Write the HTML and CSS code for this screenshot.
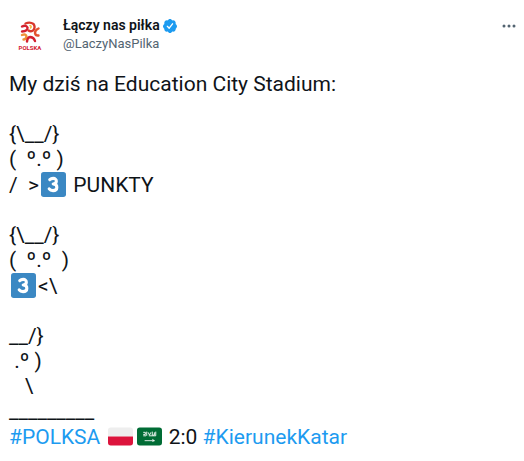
FILE: index.html
```html
<!DOCTYPE html>
<html lang="pl">
<head>
    <meta charset="UTF-8">
    <meta name="viewport" content="width=device-width, initial-scale=1.0">
    <title>Łączy nas piłka</title>
    <link rel="stylesheet" href="styles.css">
</head>
<body>
    <!-- Shared emoji shapes -->
    <svg class="sprite" aria-hidden="true">
        <symbol id="three" viewBox="0 0 36 36">
            <rect width="36" height="36" rx="4" fill="#3b88c3"/>
            <path d="M12.6 11 Q14.5 9.2 17.5 9.2 C23.8 9.2 23.5 17 17.5 17.3 C24.8 17.6 24.5 26.8 17.3 26.8 Q13.5 26.8 11.8 24.3" fill="none" stroke="#fff" stroke-width="4.4" stroke-linecap="round" stroke-linejoin="round"/>
        </symbol>
    </svg>

    <article class="tweet">
        <header class="tweet-header">
            <svg class="avatar" viewBox="0 0 48 48" role="img" aria-label="Polska">
                <g fill="none" stroke-width="2.4" stroke-linecap="round">
                    <path d="M14 16.5 Q18 14.5 19.5 17.5 Q20 21 14 21.5" stroke="#d3202f"/>
                    <path d="M17.5 13.5 Q22 11.5 25.5 14 Q28 17.5 25 20.5 Q22.5 22 20.5 20.5" stroke="#d9382c"/>
                    <path d="M22 15.5 Q24 16.5 22.5 18" stroke="#f4b942" stroke-width="1.6"/>
                    <path d="M30.5 18.5 Q27 20 27 23 Q27.5 26 30.5 25.5" stroke="#e2522f"/>
                    <path d="M14 25 Q18 23.5 18.5 26.5 Q18 29.5 15.5 29.5" stroke="#ee9338"/>
                    <path d="M19 31.5 Q19.5 27 22.5 27 Q26 27.5 27 31" stroke="#d3202f"/>
                </g>
                <text class="avatar-text" x="22" y="40" text-anchor="middle">POLSKA</text>
            </svg>
            <div class="author">
                <div class="name-row">
                    <a class="name" href="#">Łączy nas piłka</a>
                    <svg class="verified" viewBox="0 0 24 24" role="img" aria-label="Zweryfikowane konto">
                        <path fill="#1d9bf0" d="M22.5 12.5c0-1.58-.875-2.95-2.148-3.6.154-.435.238-.905.238-1.4 0-2.21-1.71-3.998-3.818-3.998-.47 0-.92.084-1.336.25C14.818 2.415 13.51 1.5 12 1.5s-2.816.917-3.437 2.25c-.415-.165-.866-.25-1.336-.25-2.11 0-3.818 1.79-3.818 4 0 .494.083.964.237 1.4-1.272.65-2.147 2.018-2.147 3.6 0 1.495.782 2.798 1.942 3.486-.02.17-.032.34-.032.514 0 2.21 1.708 4 3.818 4 .47 0 .92-.086 1.335-.25.62 1.334 1.926 2.25 3.437 2.25 1.512 0 2.818-.916 3.437-2.25.415.163.865.248 1.336.248 2.11 0 3.818-1.79 3.818-4 0-.174-.012-.344-.033-.513 1.158-.687 1.943-1.99 1.943-3.484z"/>
                        <path fill="none" stroke="#fff" stroke-width="2" stroke-linecap="round" stroke-linejoin="round" d="M8 12.5l2.8 2.8 5-6.6"/>
                    </svg>
                </div>
                <a class="handle" href="#">@LaczyNasPilka</a>
            </div>
            <button class="more-btn" type="button" aria-label="Więcej">
                <svg viewBox="0 0 14 4">
                    <circle cx="2" cy="2" r="1.5"/>
                    <circle cx="7" cy="2" r="1.5"/>
                    <circle cx="12" cy="2" r="1.5"/>
                </svg>
            </button>
        </header>

        <div class="tweet-text">
            <p>My dziś na Education City Stadium:</p>
            <p>{\__/}
(  º.º )
/  &gt;<svg class="emoji" role="img" aria-label="3"><use href="#three"/></svg> PUNKTY</p>
            <p>{\__/}
(  º.º  )
<svg class="emoji" role="img" aria-label="3"><use href="#three"/></svg>&lt;\</p>
            <p>__/}
 .º )
   \
_________
<a href="#">#POLKSA</a> <svg class="emoji" viewBox="0 0 36 36" role="img" aria-label="Polska"><path fill="#eee" d="M32 5H4a4 4 0 0 0-4 4v9h36V9a4 4 0 0 0-4-4z"/><path fill="#dc143c" d="M0 18v9a4 4 0 0 0 4 4h28a4 4 0 0 0 4-4v-9z"/></svg><svg class="emoji" viewBox="0 0 36 36" role="img" aria-label="Arabia Saudyjska"><rect y="5" width="36" height="26" rx="4" fill="#006c35"/><path d="M9 12h3v3h-3M14 11v6M16 12l2 4 2-4M22 11v5h3v-4M27 11v6M9 17h4M17 17h10" fill="none" stroke="#fff" stroke-width="1.3"/><path d="M11 24h14M22 22l3 2-3 1" fill="none" stroke="#fff" stroke-width="1.2"/></svg> 2:0 <a href="#">#KierunekKatar</a></p>
        </div>
    </article>
</body>
</html>
```

FILE: styles.css
```css
body {
    margin: 0;
    background-color: #fff;
    color: #0f1419;
    font-family: Roboto, "Liberation Sans", sans-serif;
}

a {
    color: #1d9bf0;
    text-decoration: none;
}

.sprite {
    display: none;
}

.tweet {
    padding: 10px 8px;
}

.tweet-header {
    display: flex;
    align-items: flex-start;
}

.avatar {
    width: 48px;
    height: 48px;
    margin-right: 7px;
    flex: none;
}

.avatar-text {
    font-size: 6px;
    font-weight: 700;
    fill: #d3202f;
}

.author {
    display: flex;
    flex: 1;
    flex-direction: column;
    padding-top: 6px;
}

.name-row {
    display: flex;
    align-items: center;
    gap: 2px;
}

.name {
    color: #0f1419;
    font-size: 14px;
    font-weight: 600;
    line-height: 19px;
}

.verified {
    width: 16px;
    height: 16px;
}

.handle {
    color: #536471;
    font-size: 13px;
    line-height: 18px;
}

.more-btn {
    display: flex;
    align-items: center;
    height: 32px;
    padding: 0;
    border: none;
    background: none;
    cursor: pointer;
}

.more-btn svg {
    width: 14px;
    height: 4px;
    fill: #536471;
}

.tweet-text {
    padding: 14px 1px 0;
    font-size: 21px;
    line-height: 25px;
}

.tweet-text p {
    margin: 0 0 25px;
    white-space: pre-wrap;
}

.tweet-text p:last-child {
    margin-bottom: 0;
}

.emoji {
    width: 25px;
    height: 25px;
    margin: 0 2px;
    vertical-align: -5px;
}
```
